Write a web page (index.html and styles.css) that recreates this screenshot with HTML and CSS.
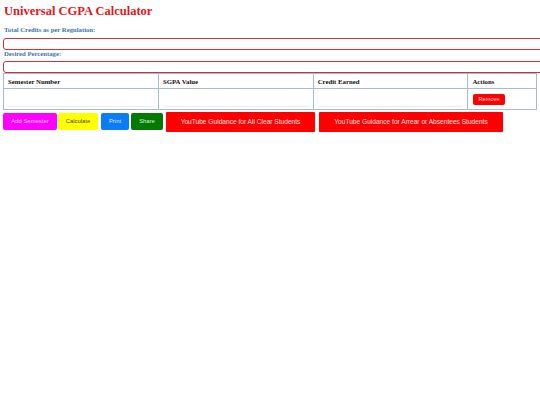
FILE: index.html
```html
<!DOCTYPE html>
<html>
<head>
<meta charset="utf-8">
<title>Universal CGPA Calculator</title>
<link rel="stylesheet" href="styles.css">
</head>
<body>
<div class="page">
  <h1 class="title">Universal CGPA Calculator</h1>
  <label class="field-label">Total Credits as per Regulation:</label>
  <input class="field" type="text">
  <label class="field-label second">Desired Percentage:</label>
  <input class="field" type="text">
  <table class="sem-table">
    <thead>
      <tr>
        <th class="col">Semester Number</th>
        <th class="col">SGPA Value</th>
        <th class="col">Credit Earned</th>
        <th class="col-act">Actions</th>
      </tr>
    </thead>
    <tbody>
      <tr>
        <td><input class="cell-input" type="text"></td>
        <td><input class="cell-input" type="text"></td>
        <td><input class="cell-input" type="text"></td>
        <td><button class="btn-remove">Remove</button></td>
      </tr>
    </tbody>
  </table>
  <div class="actions">
    <button class="btn btn-add">Add Semester</button>
    <button class="btn btn-calc">Calculate</button>
    <button class="btn btn-print">Print</button>
    <button class="btn btn-share">Share</button>
    <button class="btn btn-yt btn-yt1">YouTube Guidance for All Clear Students</button>
    <button class="btn btn-yt btn-yt2">YouTube Guidance for Arrear or Absentees Students</button>
  </div>
</div>
</body>
</html>
```
FILE: styles.css
```css
html, body {
  margin: 0;
  padding: 0;
  background: #ffffff;
}
.page {
  padding: 0 3px;
  font-family: "Liberation Serif", "Times New Roman", serif;
}
.title {
  margin: 0;
  padding-top: 4px;
  height: 17px;
  font-size: 12.5px;
  line-height: 15px;
  font-weight: bold;
  color: #e81616;
  padding-left: 1px;
}
.field-label {
  display: block;
  font-size: 6.7px;
  line-height: 8px;
  font-weight: bold;
  color: #3d74b8;
  margin-top: 5px;
  padding-left: 1px;
  height: 12px;
}
.field-label.second {
  margin-top: 0;
  height: 11px;
}
.field {
  display: block;
  box-sizing: border-box;
  width: 540px;
  height: 12px;
  margin: 0;
  padding: 0 4px;
  border: 1.3px solid #cc3333;
  border-radius: 3px;
  background: #fff;
  outline: none;
}
.sem-table {
  width: 534px;
  border-collapse: collapse;
  margin-top: 0;
  font-size: 6.8px;
}
.sem-table th,
.sem-table td {
  border: 1px solid #a9b9cf;
  text-align: left;
  vertical-align: middle;
}
.sem-table th {
  height: 14px;
  padding: 0 4px;
  font-weight: bold;
  color: #111;
}
.sem-table td {
  height: 20px;
  padding: 0 4px 0 4px;
}
.col {
  width: 148px;
}
.col-act {
  width: 60px;
}
.cell-input {
  display: block;
  box-sizing: border-box;
  width: 100%;
  height: 13px;
  margin-top: 3px;
  border: none;
  border-bottom: 1px solid #ececec;
  background: transparent;
  outline: none;
}
.btn-remove {
  display: block;
  height: 11px;
  margin-left: 1px;
  padding: 0 5px;
  border: none;
  border-radius: 2px;
  background: #ff0000;
  color: #ffdede;
  font-family: "Liberation Sans", Arial, sans-serif;
  font-size: 5.7px;
  line-height: 11px;
}
.actions {
  display: flex;
  align-items: flex-start;
  margin-top: 3px;
}
.btn {
  font-family: "Liberation Sans", Arial, sans-serif;
  font-size: 5.9px;
  border: none;
  border-radius: 2px;
  height: 17px;
  margin: 0;
  padding: 0;
  line-height: 17px;
  color: #fff;
  white-space: nowrap;
  flex: none;
}
.btn-add {
  background: #ff00ff;
  color: #ffd8ff;
  width: 54px;
}
.btn-calc {
  background: #ffff00;
  color: #444;
  width: 40px;
  margin-left: 1px;
}
.btn-print {
  background: #0a7cf5;
  color: #d8e8ff;
  width: 28px;
  margin-left: 3px;
}
.btn-share {
  background: #047a04;
  color: #d8f0d8;
  width: 32px;
  margin-left: 2px;
}
.btn-yt {
  background: #ff0000;
  color: #ffe4e4;
  height: 20px;
  line-height: 20px;
  margin-top: -1px;
  margin-left: 3px;
  border-radius: 1px;
  box-shadow: 0 1px 1px rgba(0, 0, 0, 0.25);
  font-size: 6.6px;
}
.btn-yt1 {
  width: 149px;
}
.btn-yt2 {
  width: 184px;
  margin-left: 4px;
}
```
